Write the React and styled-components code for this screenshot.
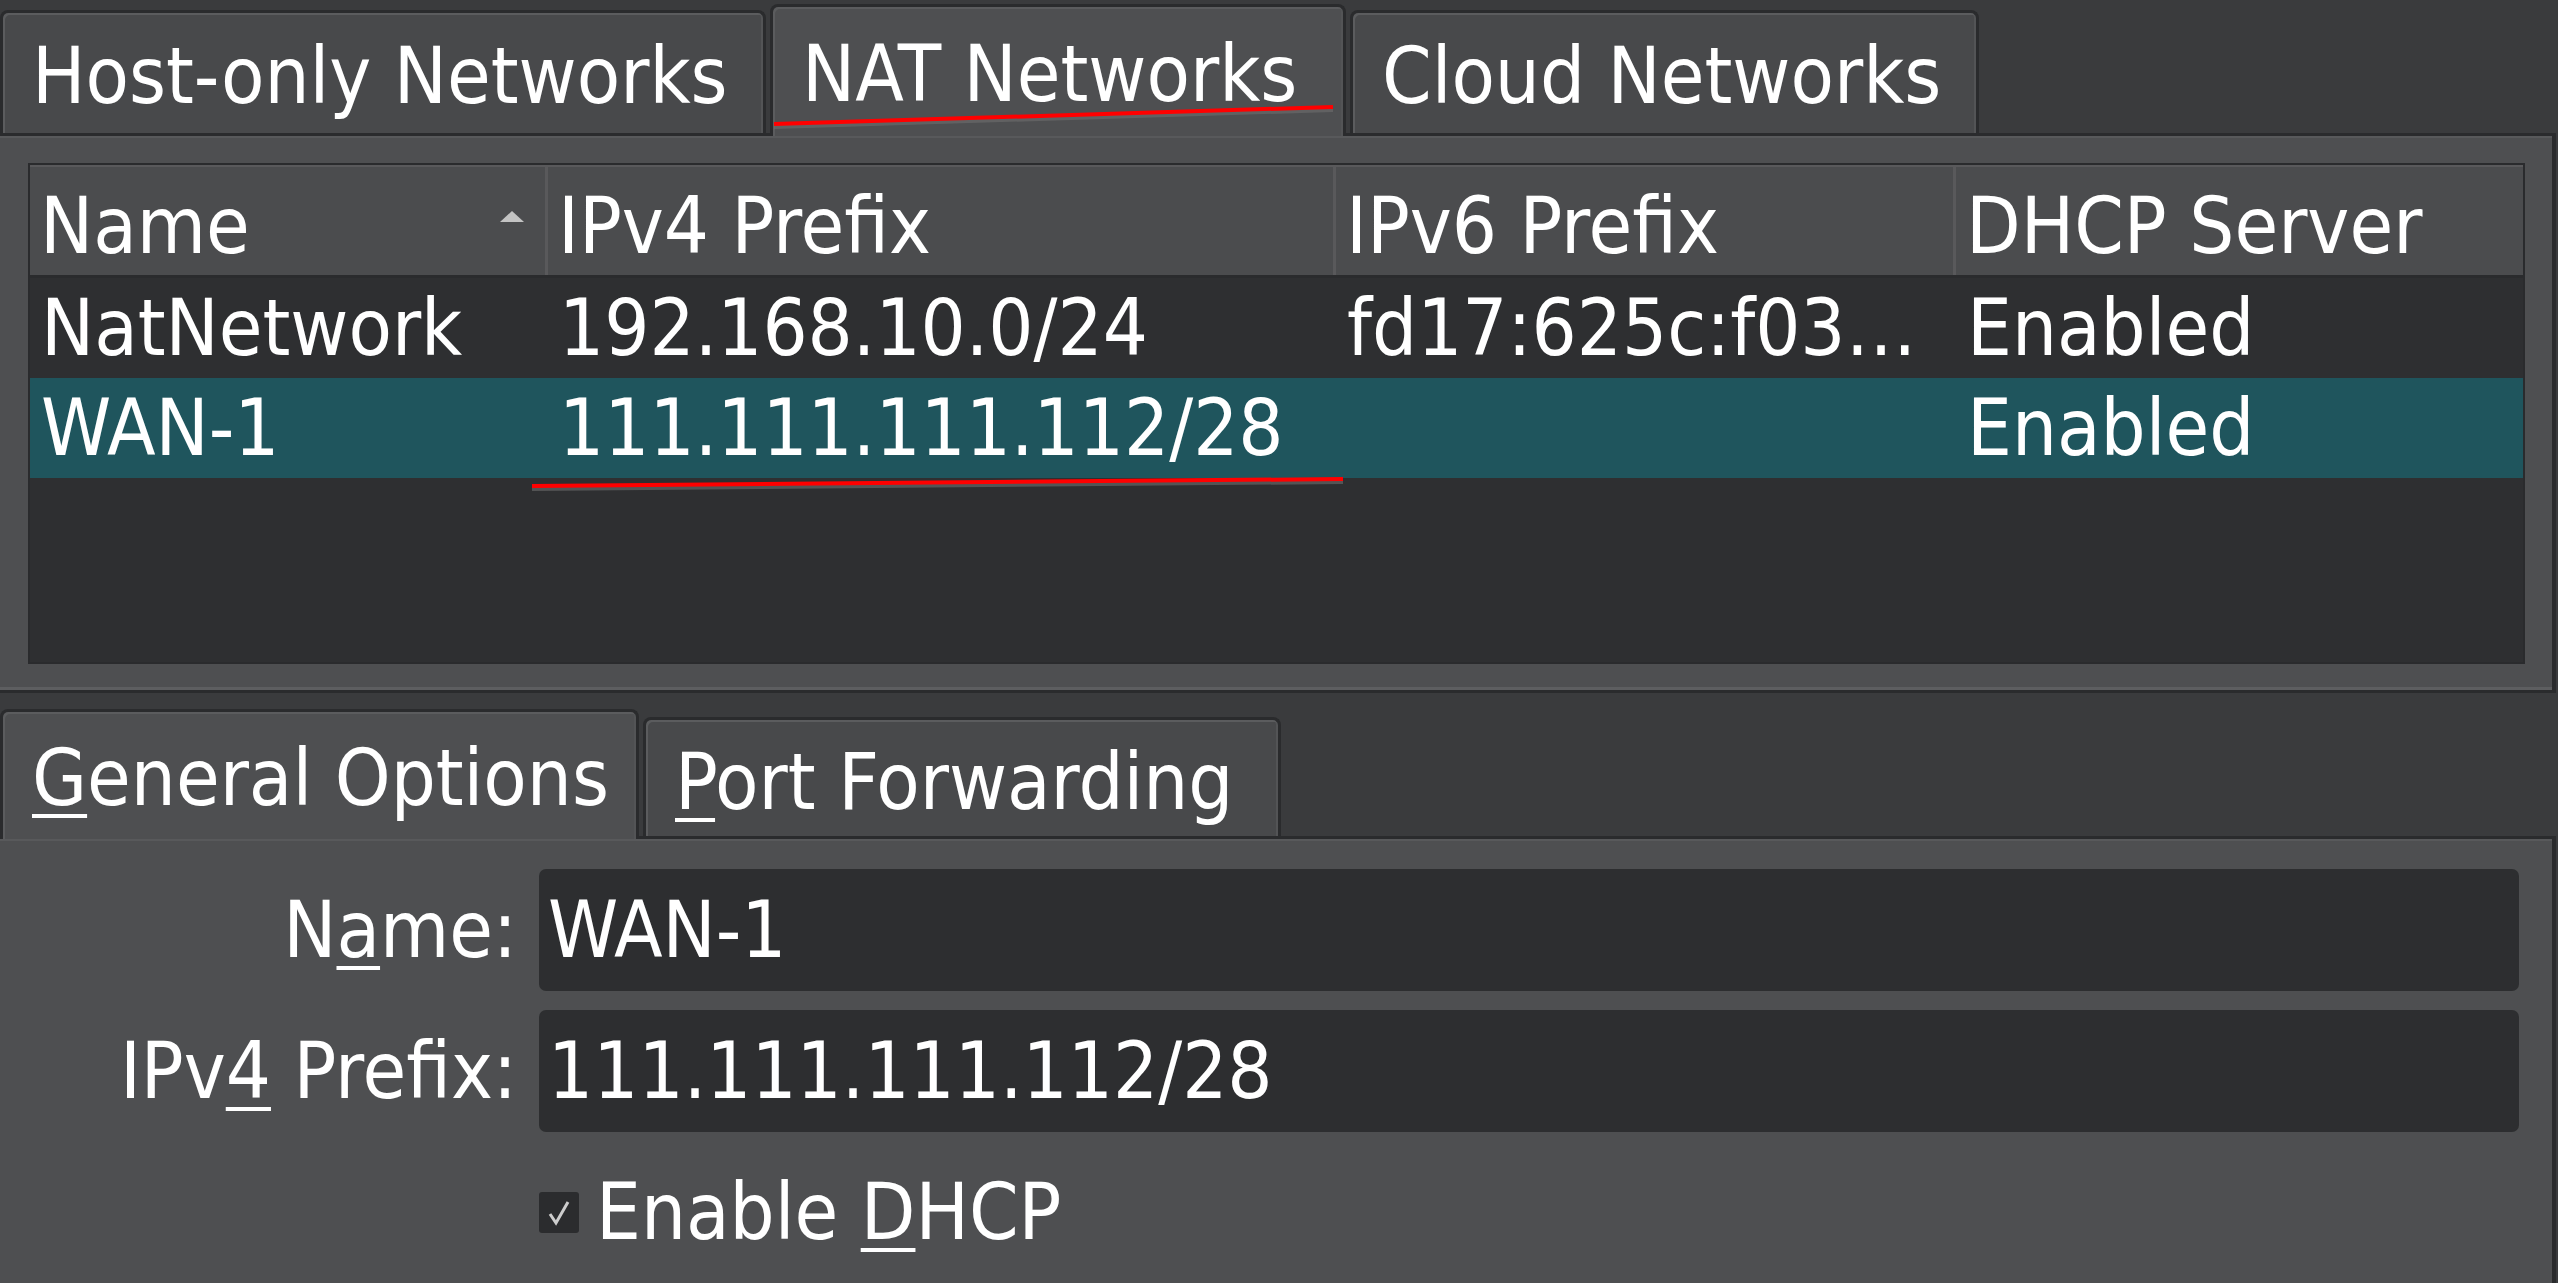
import React from "react";
import styled, { createGlobalStyle } from "styled-components";

const FONT = `"DejaVu Sans Condensed", "DejaVu Sans", sans-serif`;

const colors = {
    bg: "#3a3b3d",
    pane: "#4e4f51",
    tab: "#48494b",
    edge: "#2a2b2d",
    light: "#5a5b5d",
    well: "#2e2f31",
    head: "#4b4c4e",
    selected: "#1f555d",
    field: "#2d2e30",
    text: "#ffffff",
};

const GlobalStyle = createGlobalStyle`
    html, body {
        margin: 0;
        padding: 0;
        background: ${colors.bg};
    }
    body {
        font-family: ${FONT};
        font-stretch: condensed;
        font-size: 79px;
        color: ${colors.text};
    }
`;

const columns = "518px 788px 620px 563px";

const topTabs = [
    { label: "Host-only Networks", width: 766 },
    { label: "NAT Networks", width: 576, active: true },
    { label: "Cloud Networks", width: 629 },
];

const rows = [
    { name: "NatNetwork", ipv4: "192.168.10.0/24", ipv6: "fd17:625c:f03…", dhcp: "Enabled" },
    { name: "WAN-1", ipv4: "111.111.111.112/28", ipv6: "", dhcp: "Enabled", selected: true },
];

const App = () => (
    <Window>
        <GlobalStyle />
        <TabBar $height={133}>
            {topTabs.map((t) => (
                <Tab
                    key={t.label}
                    $width={t.width}
                    $height={t.active ? 132 : 123}
                    $active={t.active}
                    $pad={t.active ? 4 : 6}
                >
                    <span>{t.label}</span>
                </Tab>
            ))}
        </TabBar>

        <ListPane>
            <TableBox>
                <HeaderRow>
                    <HeadCell>
                        <span>Name</span>
                        <SortArrow />
                    </HeadCell>
                    <HeadCell>IPv4 Prefix</HeadCell>
                    <HeadCell>IPv6 Prefix</HeadCell>
                    <HeadCell $last>DHCP Server</HeadCell>
                </HeaderRow>
                {rows.map((r) => (
                    <Row key={r.name} $selected={r.selected}>
                        <Cell>{r.name}</Cell>
                        <Cell>{r.ipv4}</Cell>
                        <Cell>{r.ipv6}</Cell>
                        <Cell>{r.dhcp}</Cell>
                    </Row>
                ))}
            </TableBox>
        </ListPane>

        <TabBar $height={143}>
            <Tab $width={639} $height={130} $active $pad={5}>
                <span>
                    <Mnemonic>G</Mnemonic>eneral Options
                </span>
            </Tab>
            <Tab $width={638} $height={119} $pad={7}>
                <span>
                    <Mnemonic>P</Mnemonic>ort Forwarding
                </span>
            </Tab>
        </TabBar>

        <FormPane>
            <Form>
                <Label>
                    <span>
                        N<Mnemonic>a</Mnemonic>me:
                    </span>
                </Label>
                <Field readOnly defaultValue="WAN-1" />
                <Label>
                    <span>
                        IPv<Mnemonic>4</Mnemonic> Prefix:
                    </span>
                </Label>
                <Field readOnly defaultValue="111.111.111.112/28" />
                <CheckRow>
                    <CheckBox>
                        <svg width="24" height="27" viewBox="0 0 24 27">
                            <path d="M3 15 L9 24 L21 3" fill="none" stroke="#cdcdcd" strokeWidth="3" />
                        </svg>
                    </CheckBox>
                    <span>
                        Enable <Mnemonic>D</Mnemonic>HCP
                    </span>
                </CheckRow>
            </Form>
        </FormPane>

        <Marks width="2558" height="1283" viewBox="0 0 2558 1283">
            <path d="M774 127 Q1040 120 1333 110" stroke="rgba(110,110,110,0.6)" strokeWidth="4" fill="none" />
            <path d="M774 124 Q1040 117 1333 107" stroke="#ff0000" strokeWidth="4" fill="none" />
            <path d="M532 489 L1343 482" stroke="rgba(110,110,110,0.6)" strokeWidth="4" fill="none" />
            <path d="M532 486 L1343 479" stroke="#ff0000" strokeWidth="4" fill="none" />
        </Marks>
    </Window>
);

export default App;

const Window = styled.div`
    position: relative;
    width: 2558px;
    height: 1283px;
    overflow: hidden;
    display: flex;
    flex-direction: column;
`;

const TabBar = styled.div`
    height: ${(p) => p.$height}px;
    display: flex;
    align-items: flex-end;
    gap: 4px;
`;

const Tab = styled.div`
    box-sizing: border-box;
    position: relative;
    z-index: ${(p) => (p.$active ? 2 : 0)};
    width: ${(p) => p.$width}px;
    height: ${(p) => p.$height}px;
    margin-bottom: ${(p) => (p.$active ? -3 : 0)}px;
    padding: ${(p) => p.$pad}px 0 0 29px;
    display: flex;
    align-items: center;
    white-space: nowrap;
    background: ${(p) => (p.$active ? colors.pane : colors.tab)};
    border: 3px solid ${colors.edge};
    border-bottom: none;
    border-radius: 8px 8px 0 0;
    box-shadow: inset 2px 2px 0 #5b5c5e, inset -2px 0 0 #535456;
`;

const Mnemonic = styled.span`
    text-decoration: underline;
    text-decoration-thickness: 4px;
    text-underline-offset: 9px;
`;

const Pane = styled.div`
    box-sizing: border-box;
    position: relative;
    z-index: 1;
    margin-right: 2px;
    background: ${colors.pane};
    border-top: 3px solid ${colors.edge};
    border-right: 4px solid ${colors.edge};
    box-shadow: inset 0 2px 0 #58595b;
`;

const ListPane = styled(Pane)`
    height: 560px;
    padding: 27px 27px 0 28px;
    border-bottom: 3px solid ${colors.edge};
    box-shadow: inset 0 2px 0 #58595b, inset 0 -3px 0 #5d5e60;
`;

const TableBox = styled.div`
    box-sizing: border-box;
    height: 501px;
    background: ${colors.well};
    border: 2px solid ${colors.edge};
    display: flex;
    flex-direction: column;
`;

const HeaderRow = styled.div`
    display: grid;
    grid-template-columns: ${columns};
    height: 110px;
    background: ${colors.head};
    border-bottom: 3px solid ${colors.edge};
    box-shadow: inset 0 2px 0 #59595b;
`;

const HeadCell = styled.div`
    display: flex;
    align-items: center;
    padding: 12px 0 0 10px;
    white-space: nowrap;
    border-right: ${(p) => (p.$last ? "none" : `3px solid #59595b`)};
`;

const SortArrow = styled.span`
    margin: -20px 21px 0 auto;
    width: 0;
    height: 0;
    border-left: 12px solid transparent;
    border-right: 12px solid transparent;
    border-bottom: 11px solid #c3c3c3;
`;

const Row = styled.div`
    display: grid;
    grid-template-columns: ${columns};
    height: 100px;
    background: ${(p) => (p.$selected ? colors.selected : "transparent")};
`;

const Cell = styled.div`
    display: flex;
    align-items: center;
    padding-left: 11px;
    white-space: nowrap;
    overflow: hidden;
`;

const FormPane = styled(Pane)`
    flex: 1;
    padding: 30px 33px 0 0;
`;

const Form = styled.div`
    display: grid;
    grid-template-columns: 517px 1fr;
    grid-auto-rows: 122px;
    column-gap: 22px;
    row-gap: 19px;
`;

const Label = styled.div`
    display: flex;
    align-items: center;
    justify-content: flex-end;
    white-space: nowrap;
`;

const Field = styled.input`
    box-sizing: border-box;
    width: 100%;
    height: 122px;
    margin: 0;
    padding: 0 0 0 9px;
    border: none;
    outline: none;
    border-radius: 7px;
    background: ${colors.field};
    color: ${colors.text};
    font: inherit;
    font-stretch: condensed;
`;

const CheckRow = styled.div`
    grid-column: 2;
    display: flex;
    align-items: center;
    gap: 17px;
    white-space: nowrap;
`;

const CheckBox = styled.span`
    box-sizing: border-box;
    width: 40px;
    height: 41px;
    border-radius: 3px;
    background: #2b2c2e;
    display: flex;
    align-items: center;
    justify-content: center;
`;

const Marks = styled.svg`
    position: absolute;
    left: 0;
    top: 0;
    z-index: 5;
    pointer-events: none;
`;
